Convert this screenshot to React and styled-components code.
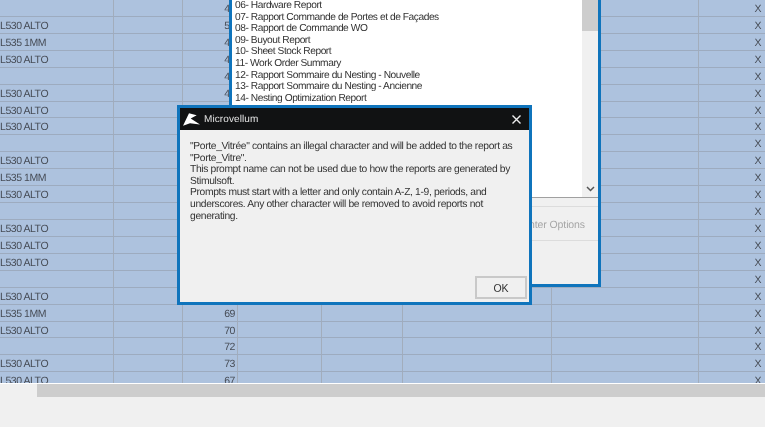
import React from 'react';
import styled, { createGlobalStyle } from 'styled-components';

const Global = createGlobalStyle`
  html, body { margin: 0; padding: 0; background: #f0f0f0; }
  body { font-family: "Liberation Sans", Arial, sans-serif; overflow: hidden; text-rendering: geometricPrecision; }
`;

const Page = styled.div`
  position: relative;
  width: 765px;
  height: 427px;
  overflow: hidden;
  background: #f0f0f0;
  filter: blur(0.3px);
`;

const Grid = styled.div`
  height: 384px;
  box-sizing: border-box;
  overflow: hidden;
  background: #adc2de;
  border-bottom: 1px solid #fff;
`;

const Row = styled.div`
  display: grid;
  grid-template-columns: 114px 69px 55px 84px 81px 149px 147px 1fr;
  height: 16.93px;
  box-sizing: border-box;
  border-bottom: 1px solid #9dabbf;
`;

const Cell = styled.div`
  box-sizing: border-box;
  border-right: ${p => (p.$last ? 'none' : '1px solid #a2adbc')};
  font-size: 10.5px;
  letter-spacing: -0.45px;
  line-height: 19px;
  color: #474d57;
  white-space: nowrap;
  overflow: hidden;
  text-align: ${p => (p.$right ? 'right' : 'left')};
  padding: 0 ${p => p.$pad || 0}px 0 0;
`;

const Scrollbar = styled.div`
  display: flex;
  height: 13px;
`;
const ScrollStart = styled.div`
  width: 37px;
  background: #f0f0f0;
`;
const ScrollThumb = styled.div`
  flex: 1;
  background: #cdcdcd;
`;

const Window = styled.div`
  position: absolute;
  box-sizing: border-box;
  border: 3px solid #0f74bc;
  background: #f0f0f0;
  display: flex;
  flex-direction: column;
`;

const BackWindow = styled(Window)`
  left: 229px;
  top: -3px;
  width: 372px;
  height: 290px;
`;

const ListArea = styled.div`
  display: flex;
  height: 198px;
  flex: none;
  background: #fff;
  border-bottom: 1px solid #a0a0a0;
  box-sizing: border-box;
`;

const ListItems = styled.div`
  flex: 1;
  padding: 0 0 0 3px;
  font-size: 10.2px;
  letter-spacing: -0.44px;
  line-height: 11.6px;
  color: #333;
  white-space: nowrap;
`;

const ListScroll = styled.div`
  width: 16px;
  background: #f0f0f0;
  display: flex;
  flex-direction: column;
  justify-content: space-between;
  align-items: center;
`;

const ListThumb = styled.div`
  width: 100%;
  height: 31px;
  background: #cdcdcd;
`;

const Chevron = styled.svg`
  width: 9px;
  height: 6px;
  margin-bottom: 5px;
`;

const OptionsBand = styled.div`
  margin-top: 8px;
  height: 35px;
  box-sizing: border-box;
  border-top: 1px solid #dcdcdc;
  border-bottom: 1px solid #dcdcdc;
  font-size: 10.5px;
  letter-spacing: -0.1px;
  line-height: 36px;
  color: #a6a6a6;
  text-align: right;
  padding-right: 13px;
`;

const FrontWindow = styled(Window)`
  left: 177px;
  top: 105px;
  width: 355px;
  height: 200px;
`;

const TitleBar = styled.div`
  height: 22px;
  flex: none;
  background: #111213;
  display: flex;
  align-items: center;
  padding: 0 7px 0 3px;
  gap: 3px;
  color: #e4e4e4;
  font-size: 10px;
`;

const Logo = styled.svg`
  width: 18px;
  height: 15px;
  flex: none;
`;

const TitleText = styled.span`
  flex: 1;
  letter-spacing: 0.1px;
`;

const CloseIcon = styled.svg`
  width: 9px;
  height: 9px;
  margin-right: 1px;
`;

const Body = styled.div`
  flex: 1;
  position: relative;
  padding: 11px 4px 0 10px;
  font-size: 10.3px;
  letter-spacing: -0.35px;
  line-height: 11.6px;
  color: #333;
`;

const Para = styled.div`
  white-space: nowrap;
`;

const OkButton = styled.button`
  position: absolute;
  right: 2px;
  bottom: 3px;
  width: 52px;
  height: 23px;
  background: #f0f0f0;
  border: 2px solid #c9c9c9;
  font-family: inherit;
  font-size: 10.5px;
  color: #333;
  padding: 0;
`;

const rows = [
  ['', '47'], ['L530 ALTO', '50'], ['L535 1MM', '45'], ['L530 ALTO', '46'],
  ['', '48'], ['L530 ALTO', '49'], ['L530 ALTO', '51'], ['L530 ALTO', '52'],
  ['', '53'], ['L530 ALTO', '54'], ['L535 1MM', '55'], ['L530 ALTO', '56'],
  ['', '57'], ['L530 ALTO', '58'], ['L530 ALTO', '59'], ['L530 ALTO', '60'],
  ['', '61'], ['L530 ALTO', '68'], ['L535 1MM', '69'], ['L530 ALTO', '70'],
  ['', '72'], ['L530 ALTO', '73'], ['L530 ALTO', '67'],
];

const reports = [
  '06- Hardware Report',
  '07- Rapport Commande de Portes et de Façades',
  '08- Rapport de Commande WO',
  '09- Buyout Report',
  '10- Sheet Stock Report',
  '11- Work Order Summary',
  '12- Rapport Sommaire du Nesting - Nouvelle',
  '13- Rapport Sommaire du Nesting - Ancienne',
  '14- Nesting Optimization Report',
];

const message = [
  '"Porte_Vitrée" contains an illegal character and will be added to the report as',
  '"Porte_Vitre".',
  'This prompt name can not be used due to how the reports are generated by',
  'Stimulsoft.',
  'Prompts must start with a letter and only contain A-Z, 1-9, periods, and',
  'underscores. Any other character will be removed to avoid reports not',
  'generating.',
];

export default function App() {
  return (
    <Page>
      <Global />
      <Grid>
        {rows.map(([label, num], i) => (
          <Row key={i}>
            <Cell>{label}</Cell>
            <Cell />
            <Cell $right $pad={2}>{num}</Cell>
            <Cell />
            <Cell />
            <Cell />
            <Cell />
            <Cell $right $last $pad={4}>X</Cell>
          </Row>
        ))}
      </Grid>
      <Scrollbar>
        <ScrollStart />
        <ScrollThumb />
      </Scrollbar>

      <BackWindow>
        <ListArea>
          <ListItems>
            {reports.map(r => <div key={r}>{r}</div>)}
          </ListItems>
          <ListScroll>
            <ListThumb />
            <Chevron viewBox="0 0 9 6">
              <path d="M1 1l3.5 3.5L8 1" fill="none" stroke="#555" strokeWidth="1.5" />
            </Chevron>
          </ListScroll>
        </ListArea>
        <OptionsBand>Printer Options</OptionsBand>
      </BackWindow>

      <FrontWindow>
        <TitleBar>
          <Logo viewBox="0 0 18 15">
            <path d="M0 13.8 L6 1.2 L13.7 3.2 L7.7 6.5 L17 12.5 L7 11.2 Z" fill="#fff" />
          </Logo>
          <TitleText>Microvellum</TitleText>
          <CloseIcon viewBox="0 0 9 9">
            <path d="M.5.5l8 8M8.5.5l-8 8" stroke="#eee" strokeWidth="1.4" />
          </CloseIcon>
        </TitleBar>
        <Body>
          {message.map(l => <Para key={l}>{l}</Para>)}
          <OkButton>OK</OkButton>
        </Body>
      </FrontWindow>
    </Page>
  );
}
